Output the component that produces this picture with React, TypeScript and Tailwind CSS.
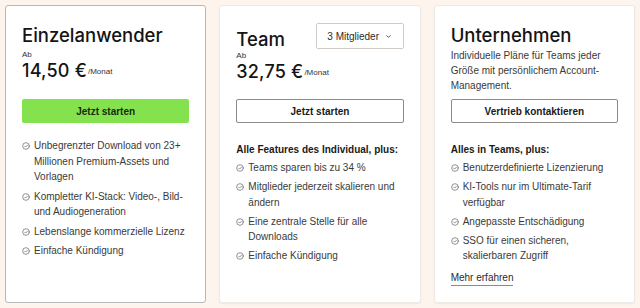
import React from "react";

const Check: React.FC = () => (
  <svg
    width="8"
    height="8"
    viewBox="0 0 24 24"
    fill="none"
    stroke="#6b6b6b"
    strokeWidth="2.2"
    strokeLinecap="round"
    strokeLinejoin="round"
    className="mt-[4px] shrink-0"
  >
    <circle cx="12" cy="12" r="10" />
    <path d="m8 12.5 2.8 2.8L16.5 9.5" />
  </svg>
);

const Feature: React.FC<{ children: React.ReactNode }> = ({ children }) => (
  <li className="flex items-start gap-[4px]">
    <Check />
    <span>{children}</span>
  </li>
);

const Price: React.FC<{ value: string }> = ({ value }) => (
  <div className="flex items-start font-['Inter',sans-serif]">
    <span className="text-[18px] leading-[22px] font-medium tracking-[0.2px] text-[#141414]">{value} €</span>
    <span className="text-[8px] leading-[8px] mt-[8px] ml-[1px] text-[#333] font-['Liberation_Sans',sans-serif]">/Monat</span>
  </div>
);

export default function App() {
  return (
    <div className="h-[308px] w-[640px] bg-[#fdf4ee] p-[5px] grid grid-cols-3 gap-[13px] text-[#1c1c1c] font-['Liberation_Sans','Noto_Sans',sans-serif]">
      {/* Einzelanwender */}
      <div className="bg-white border border-[#b9b6b3] rounded-[3px] px-[16px] pt-[17px] flex flex-col">
        <h2 className="font-['Inter',sans-serif] text-[18.5px] leading-[24px] font-medium text-[#141414]">Einzelanwender</h2>
        <p className="text-[8px] leading-[10px] mt-[3px] text-[#333]">Ab</p>
        <Price value="14,50" />
        <button className="mt-[17px] h-[24px] w-full bg-[#83e24d] rounded-[2px] text-[10px] font-bold text-[#1a2a10]">
          Jetzt starten
        </button>
        <ul className="mt-[15px] flex flex-col gap-[4px] text-[10px] leading-[15.5px] text-[#3a3a3a]">
          <Feature>Unbegrenzter Download von 23+ Millionen Premium-Assets und Vorlagen</Feature>
          <Feature>Kompletter KI-Stack: Video-, Bild- und Audiogeneration</Feature>
          <Feature>Lebenslange kommerzielle Lizenz</Feature>
          <Feature>Einfache Kündigung</Feature>
        </ul>
      </div>

      {/* Team */}
      <div className="bg-white border border-[#efe9e4] rounded-[3px] shadow-[0_1px_2px_rgba(0,0,0,0.06)] px-[16px] pt-[17px] flex flex-col">
        <div className="flex items-start justify-between">
          <h2 className="font-['Inter',sans-serif] text-[18.5px] leading-[24px] font-medium mt-[4px] text-[#141414]">Team</h2>
          <button className="h-[26px] w-[88px] border border-[#cfcac6] rounded-[2px] flex items-center justify-center gap-[6px] text-[10px] text-[#2a2a2a]">
            3 Mitglieder
            <svg width="7" height="7" viewBox="0 0 24 24" fill="none" stroke="#444" strokeWidth="3" strokeLinecap="round" strokeLinejoin="round">
              <path d="m6 9 6 6 6-6" />
            </svg>
          </button>
        </div>
        <p className="text-[8px] leading-[10px] text-[#333]">Ab</p>
        <Price value="32,75" />
        <button className="mt-[16px] h-[24px] w-full border border-[#8e8a87] rounded-[2px] text-[10px] font-bold text-[#1a1a1a]">
          Jetzt starten
        </button>
        <p className="mt-[19px] text-[10px] leading-[15px] font-bold text-[#1a1a1a]">Alle Features des Individual, plus:</p>
        <ul className="mt-[3px] flex flex-col gap-[3.5px] text-[10px] leading-[15.5px] text-[#3a3a3a]">
          <Feature>Teams sparen bis zu 34 %</Feature>
          <Feature>Mitglieder jederzeit skalieren und ändern</Feature>
          <Feature>Eine zentrale Stelle für alle Downloads</Feature>
          <Feature>Einfache Kündigung</Feature>
        </ul>
      </div>

      {/* Unternehmen */}
      <div className="bg-white border border-[#efe9e4] rounded-[3px] shadow-[0_1px_2px_rgba(0,0,0,0.06)] px-[16px] pt-[17px] flex flex-col">
        <h2 className="font-['Inter',sans-serif] text-[18.5px] leading-[24px] font-medium text-[#141414]">Unternehmen</h2>
        <p className="mt-[1px] text-[10px] leading-[15px] text-[#3a3a3a]">
          Individuelle Pläne für Teams jeder Größe mit persönlichem Account-Management.
        </p>
        <button className="mt-[6px] h-[24px] w-full border border-[#8e8a87] rounded-[2px] text-[10px] font-bold text-[#1a1a1a]">
          Vertrieb kontaktieren
        </button>
        <p className="mt-[19px] text-[10px] leading-[15px] font-bold text-[#1a1a1a]">Alles in Teams, plus:</p>
        <ul className="mt-[3px] flex flex-col gap-[3.5px] text-[10px] leading-[15.5px] text-[#3a3a3a]">
          <Feature>Benutzerdefinierte Lizenzierung</Feature>
          <Feature>KI-Tools nur im Ultimate-Tarif verfügbar</Feature>
          <Feature>Angepasste Entschädigung</Feature>
          <Feature>SSO für einen sicheren, skalierbaren Zugriff</Feature>
        </ul>
        <a className="mt-[6px] self-start text-[10px] leading-[15px] text-[#2a2a2a] border-b border-[#8e8a87]">Mehr erfahren</a>
      </div>
    </div>
  );
}
